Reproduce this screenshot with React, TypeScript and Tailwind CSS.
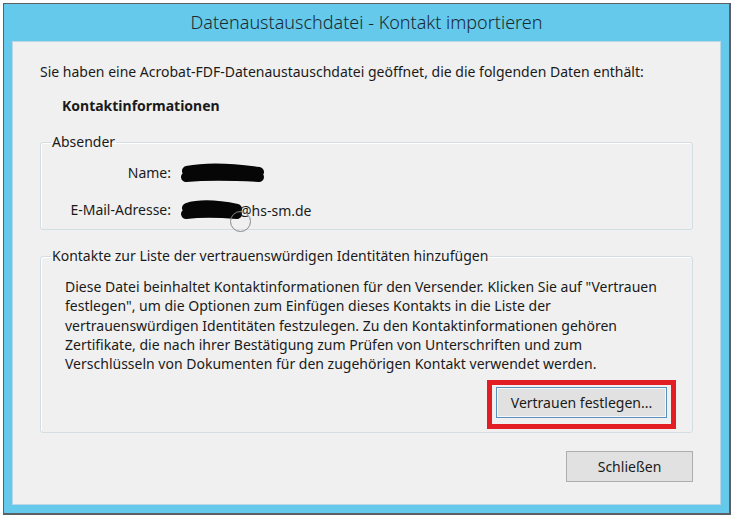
import React from "react";

// Scribbled-over value, drawn as a thick marker stroke
function Redacted({ width }: { width: number }) {
  return (
    <svg width={width} height={22} viewBox={`0 0 ${width} 22`} className="inline-block align-middle">
      <path
        d={`M6 8 C ${width * 0.3} 4, ${width * 0.6} 5, ${width - 6} 9 M5 14 C ${width * 0.35} 12, ${width * 0.7} 13, ${width - 6} 14`}
        stroke="#060606"
        strokeWidth={10}
        strokeLinecap="round"
        fill="none"
      />
    </svg>
  );
}

function DialogButton({ label, focused }: { label: string; focused?: boolean }) {
  return (
    <button
      className={
        focused
          ? "h-[31px] w-[171px] border border-[#5a8fbd] bg-[#e1e1e1] text-[14px] text-[#1a1a1a] shadow-[inset_0_0_0_1px_#f4f8fb]"
          : "h-[31px] w-[127px] border border-[#adadad] bg-[#e1e1e1] text-[14px] text-[#1a1a1a]"
      }
    >
      {label}
    </button>
  );
}

export default function App() {
  return (
    <div className="w-[737px] h-[519px] bg-white pl-[3px] pt-[3px] font-['Noto_Sans',sans-serif]">
      <div className="flex h-[512px] w-[728px] flex-col border border-r-2 border-b-2 border-[#5c6064] bg-[#64c9ea] px-[8px] pb-[8px]">
        <div className="flex h-[37px] items-center justify-center text-[18px] font-light text-[#1b2a33]">
          Datenaustauschdatei - Kontakt importieren
        </div>

        <div className="flex flex-1 flex-col border border-[#b9d7e6] bg-[#f0f0f0] px-[27px] pt-[21px] text-[14px] text-[#1a1a1a]">
          <p className="leading-[18px]">
            Sie haben eine Acrobat-FDF-Datenaustauschdatei geöffnet, die die folgenden Daten enthält:
          </p>
          <p className="mt-[16px] pl-[22px] font-bold leading-[18px]">Kontaktinformationen</p>

          <fieldset className="mt-[18px] h-[97px] rounded-[3px] border border-[#d3dde4] px-[10px] shadow-[inset_1px_1px_0_#fff]">
            <legend className="px-[1px] leading-[18px]">Absender</legend>
            <div className="grid grid-cols-[120px_1fr] gap-x-[10px] gap-y-[15px] pt-[12px] leading-[20px]">
              <span className="text-right">Name:</span>
              <span className="flex items-center">
                <Redacted width={84} />
              </span>
              <span className="text-right">E-Mail-Adresse:</span>
              <span className="relative flex items-center">
                <Redacted width={62} />
                <span className="-ml-[4px]">@hs-sm.de</span>
                <span className="absolute left-[49px] top-[11px] h-[21px] w-[21px] rounded-full border border-[#858a8e]" />
              </span>
            </div>
          </fieldset>

          <fieldset className="mt-[17px] h-[186px] rounded-[3px] border border-[#d3dde4] px-[10px] shadow-[inset_1px_1px_0_#fff]">
            <legend className="px-[1px] leading-[18px]">
              Kontakte zur Liste der vertrauenswürdigen Identitäten hinzufügen
            </legend>
            <p className="pl-[14px] pt-[12px] leading-[19.25px]">
              Diese Datei beinhaltet Kontaktinformationen für den Versender. Klicken Sie auf "Vertrauen
              <br />
              festlegen", um die Optionen zum Einfügen dieses Kontakts in die Liste der
              <br />
              vertrauenswürdigen Identitäten festzulegen. Zu den Kontaktinformationen gehören
              <br />
              Zertifikate, die nach ihrer Bestätigung zum Prüfen von Unterschriften und zum
              <br />
              Verschlüsseln von Dokumenten für den zugehörigen Kontakt verwendet werden.
            </p>
            <div className="mt-[7px] flex justify-end pr-[6px]">
              <div className="border-[5px] border-[#e21d24] px-[4px] pt-[2px] pb-[6px]">
                <DialogButton label="Vertrauen festlegen..." focused />
              </div>
            </div>
          </fieldset>

          <div className="mt-[18px] flex justify-end">
            <DialogButton label="Schließen" />
          </div>
        </div>
      </div>
    </div>
  );
}
